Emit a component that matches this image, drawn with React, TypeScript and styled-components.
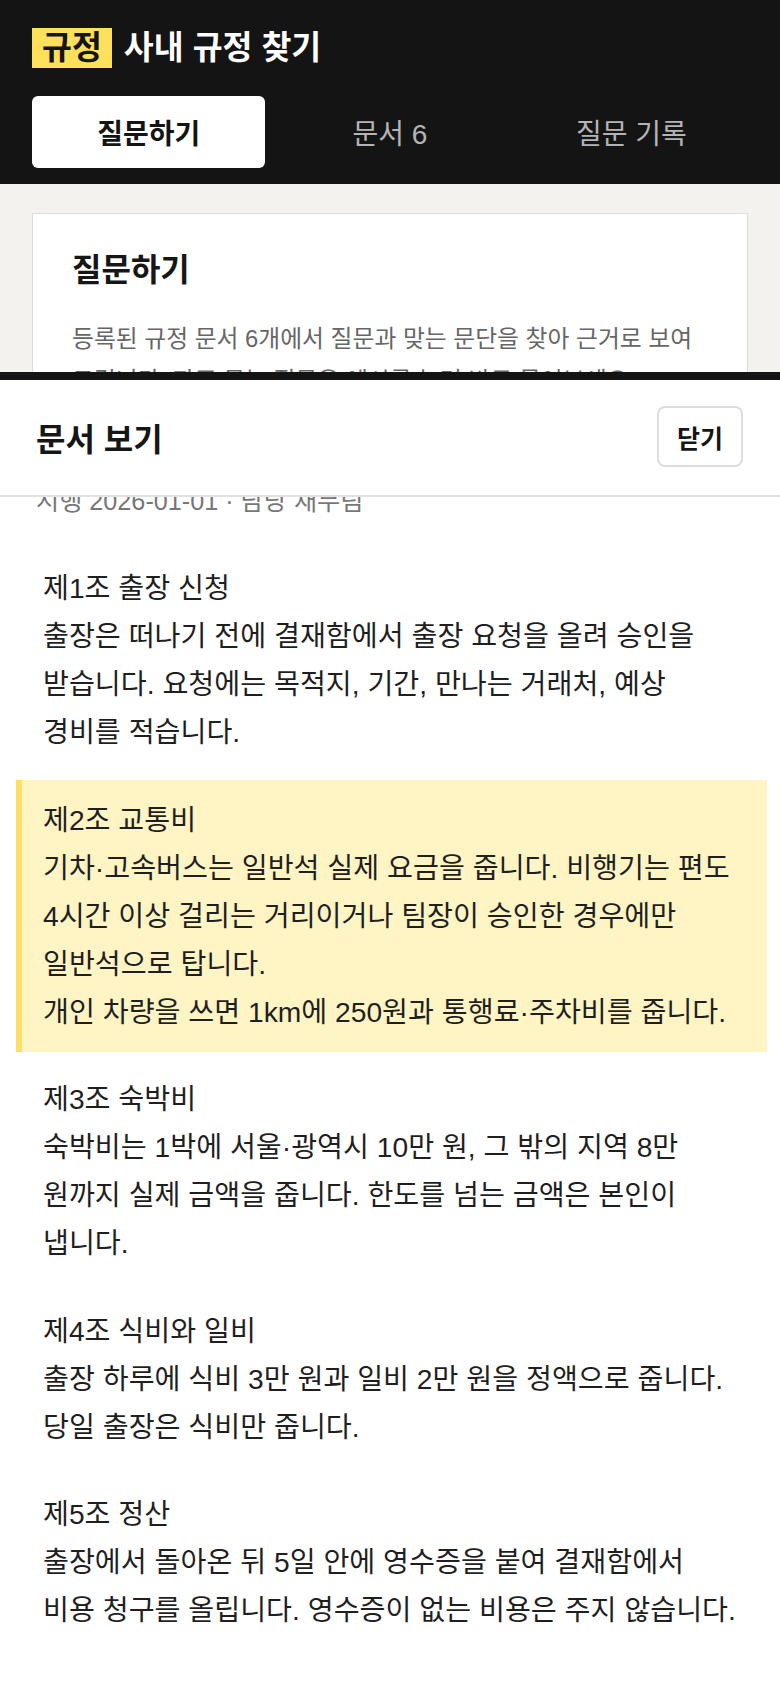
import React, { useLayoutEffect, useRef } from "react";
import styled, { createGlobalStyle } from "styled-components";

const GlobalStyle = createGlobalStyle`
  * { box-sizing: border-box; }
  html, body { margin: 0; padding: 0; }
  body {
    background: #f3f2ee;
    font-family: "Liberation Sans", "Noto Sans CJK KR", sans-serif;
    color: #1c1c1c;
  }
`;

const Page = styled.div`
  min-height: 1688px;
  background: #f3f2ee;
`;

const Header = styled.header`
  background: #141414;
  padding: 28px 32px 16px;
  display: flex;
  flex-direction: column;
  gap: 28px;
`;

const Brand = styled.div`
  display: flex;
  align-items: center;
  gap: 12px;
  height: 40px;
`;

const Badge = styled.span`
  background: #ffe05a;
  color: #141414;
  font-size: 32.5px;
  font-weight: 700;
  line-height: 40px;
  padding: 0 10px;
`;

const BrandTitle = styled.h1`
  margin: 0;
  color: #ffffff;
  font-size: 32.5px;
  font-weight: 700;
  line-height: 40px;
`;

const Tabs = styled.nav`
  display: grid;
  grid-template-columns: repeat(3, 1fr);
  gap: 8px;
`;

const Tab = styled.button<{ $active?: boolean }>`
  height: 72px;
  border: none;
  border-radius: 6px;
  background: ${(p) => (p.$active ? "#ffffff" : "transparent")};
  color: ${(p) => (p.$active ? "#141414" : "#b4b4b4")};
  font-family: inherit;
  font-size: 28px;
  font-weight: ${(p) => (p.$active ? 700 : 400)};
  cursor: pointer;
`;

const Main = styled.main`
  padding: 29px 32px 40px;
`;

const Card = styled.section`
  background: #ffffff;
  border: 1px solid #dedcd8;
  padding: 35px 39px 40px;
  min-height: 600px;
`;

const CardTitle = styled.h2`
  margin: 0 0 27px;
  font-size: 32px;
  font-weight: 700;
  line-height: 42px;
  color: #161616;
`;

const CardDesc = styled.p`
  margin: 0;
  font-size: 23.8px;
  line-height: 42px;
  color: #666666;
  word-break: keep-all;
`;

const Sheet = styled.div`
  position: fixed;
  left: 0;
  right: 0;
  top: 372px;
  bottom: 0;
  background: #ffffff;
  border-top: 8px solid #141414;
  display: flex;
  flex-direction: column;
`;

const SheetHeader = styled.div`
  display: flex;
  align-items: center;
  justify-content: space-between;
  padding: 26px 37px 28px 36px;
  border-bottom: 2px solid #e2e2e2;
`;

const SheetTitle = styled.h2`
  margin: 0;
  font-size: 32px;
  font-weight: 700;
  color: #161616;
`;

const CloseButton = styled.button`
  height: 61px;
  padding: 0 18px;
  background: #ffffff;
  border: 2px solid #dddddd;
  border-radius: 8px;
  font-family: inherit;
  font-size: 25px;
  font-weight: 700;
  color: #161616;
  cursor: pointer;
`;

const SheetBody = styled.div`
  flex: 1;
  overflow-y: auto;
  scrollbar-width: none;
  padding: 24px 13px 120px 16px;
  &::-webkit-scrollbar { display: none; }
`;

const Meta = styled.div`
  padding: 0 20px;
  font-size: 25.2px;
  line-height: 33px;
  color: #777777;
  margin-bottom: 30px;
`;

const Article = styled.article<{ $highlight?: boolean }>`
  padding: 16px 27px 16px 21px;
  border-left: 6px solid ${(p) => (p.$highlight ? "#ffe066" : "transparent")};
  background: ${(p) => (p.$highlight ? "#fff5c4" : "transparent")};
  font-size: 28.2px;
  line-height: 48px;
  color: #1f1f1f;
  white-space: pre-line;
  word-break: keep-all;
  & + & { margin-top: 7.5px; }
`;

const articles = [
  {
    text: "제1조 출장 신청\n출장은 떠나기 전에 결재함에서 출장 요청을 올려 승인을 받습니다. 요청에는 목적지, 기간, 만나는 거래처, 예상 경비를 적습니다.",
  },
  {
    text: "제2조 교통비\n기차·고속버스는 일반석 실제 요금을 줍니다. 비행기는 편도 4시간 이상 걸리는 거리이거나 팀장이 승인한 경우에만 일반석으로 탑니다.\n개인 차량을 쓰면 1km에 250원과 통행료·주차비를 줍니다.",
    highlight: true,
  },
  {
    text: "제3조 숙박비\n숙박비는 1박에 서울·광역시 10만 원, 그 밖의 지역 8만 원까지 실제 금액을 줍니다. 한도를 넘는 금액은 본인이 냅니다.",
  },
  {
    text: "제4조 식비와 일비\n출장 하루에 식비 3만 원과 일비 2만 원을 정액으로 줍니다. 당일 출장은 식비만 줍니다.",
  },
  {
    text: "제5조 정산\n출장에서 돌아온 뒤 5일 안에 영수증을 붙여 결재함에서 비용 청구를 올립니다. 영수증이 없는 비용은 주지 않습니다.",
  },
];

export default function App() {
  const bodyRef = useRef<HTMLDivElement>(null);

  useLayoutEffect(() => {
    if (bodyRef.current) bodyRef.current.scrollTop = 36;
  }, []);

  return (
    <>
      <GlobalStyle />
      <Page>
        <Header>
          <Brand>
            <Badge>규정</Badge>
            <BrandTitle>사내 규정 찾기</BrandTitle>
          </Brand>
          <Tabs>
            <Tab $active>질문하기</Tab>
            <Tab>문서 6</Tab>
            <Tab>질문 기록</Tab>
          </Tabs>
        </Header>
        <Main>
          <Card>
            <CardTitle>질문하기</CardTitle>
            <CardDesc>
              등록된 규정 문서 6개에서 질문과 맞는 문단을 찾아 근거로 보여 드립니다. 자주 묻는 질문은 예시를 눌러 바로 물어보세요.
            </CardDesc>
          </Card>
        </Main>
        <Sheet role="dialog" aria-label="문서 보기">
          <SheetHeader>
            <SheetTitle>문서 보기</SheetTitle>
            <CloseButton>닫기</CloseButton>
          </SheetHeader>
          <SheetBody ref={bodyRef}>
            <Meta>시행 2026-01-01 · 담당 재무팀</Meta>
            {articles.map((a, i) => (
              <Article key={i} $highlight={a.highlight}>
                {a.text}
              </Article>
            ))}
          </SheetBody>
        </Sheet>
      </Page>
    </>
  );
}
